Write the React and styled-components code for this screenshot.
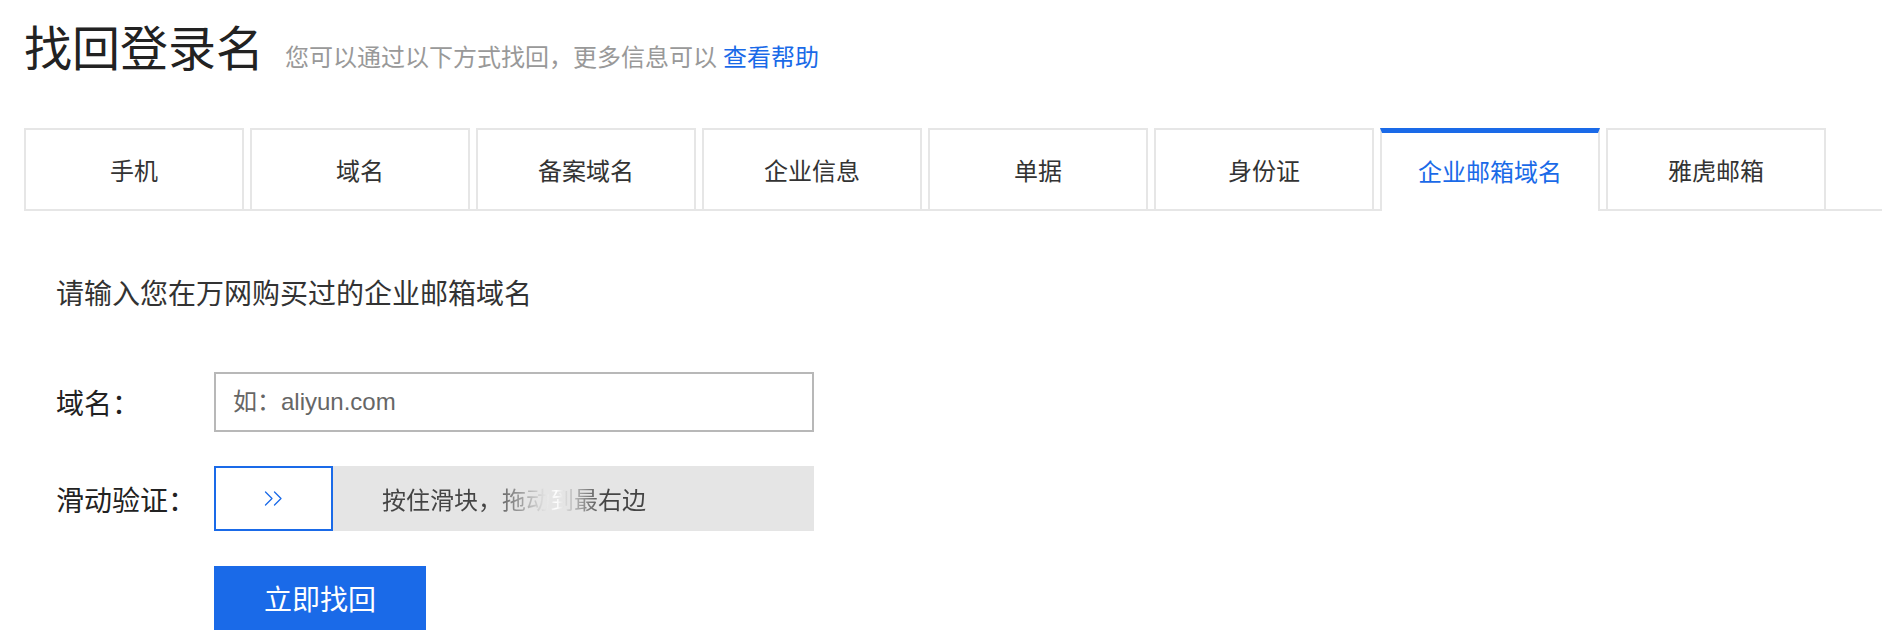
import styled, {createGlobalStyle} from "styled-components";

const Global=createGlobalStyle`
     html,body{
          margin:0;
          padding:0;
          background:#fff;
     }
     body{
          font-family:"Liberation Sans","Noto Sans CJK SC",sans-serif;
          color:#333;
     }
`;

const BLUE="#1a6ae8";

const Page=styled.div`
     width:1882px;
     height:642px;
     overflow:hidden;
`;

const Header=styled.div`
     display:flex;
     align-items:baseline;
     margin:21px 0 0 24px;
`;

const Title=styled.h1`
     margin:0;
     font-family:"Noto Sans CJK SC",sans-serif;
     font-size:48px;
     line-height:48px;
     font-weight:400;
     color:#222;
`;

const Sub=styled.span`
     margin-left:21px;
     font-family:"Noto Sans CJK SC",sans-serif;
     font-size:24px;
     color:#999;
     a{
          color:${BLUE};
          text-decoration:none;
          margin-left:6px;
     }
`;

const TabBar=styled.div`
     display:flex;
     align-items:flex-end;
     gap:6px;
     margin:55px 0 0 24px;
     border-bottom:2px solid #e6e6e6;
`;

const Tab=styled.div`
     box-sizing:border-box;
     width:220px;
     height:${(p)=>(p.$active ? "83px" : "81px")};
     margin-bottom:${(p)=>(p.$active ? "-2px" : "0")};
     display:flex;
     align-items:center;
     justify-content:center;
     border:2px solid #e6e6e6;
     border-bottom:none;
     border-top:${(p)=>(p.$active ? `5px solid ${BLUE}` : "2px solid #e6e6e6")};
     padding-bottom:${(p)=>(p.$active ? "3px" : "0")};
     background:#fff;
     font-family:"Noto Sans CJK SC",sans-serif;
     font-size:24px;
     color:${(p)=>(p.$active ? BLUE : "#333")};
     cursor:pointer;
`;

const Body=styled.div`
     padding:61px 0 0 56px;
`;

const Intro=styled.div`
     font-family:"Noto Sans CJK SC",sans-serif;
     font-size:28px;
     line-height:40px;
     color:#333;
     margin-bottom:60px;
`;

const Row=styled.div`
     display:flex;
     align-items:center;
     margin-bottom:${(p)=>p.$gap || 0}px;
`;

const Label=styled.label`
     width:158px;
     flex-shrink:0;
     font-family:"Noto Sans CJK SC",sans-serif;
     font-size:28px;
     color:#222;
`;

const Input=styled.input`
     box-sizing:border-box;
     width:600px;
     height:60px;
     border:2px solid #b8b8b8;
     padding:0 17px;
     font-family:"Liberation Sans","Noto Sans CJK SC",sans-serif;
     font-size:24px;
     color:#333;
     outline:none;
     &::placeholder{
          color:#666;
     }
`;

const Slider=styled.div`
     position:relative;
     width:600px;
     height:65px;
     background:#e5e5e5;
     display:flex;
     align-items:center;
`;

const Handle=styled.div`
     box-sizing:border-box;
     width:119px;
     height:100%;
     background:#fff;
     border:2px solid ${BLUE};
     display:flex;
     align-items:center;
     justify-content:center;
     position:relative;
     z-index:1;
     cursor:grab;
`;

const HintWrap=styled.div`
     position:absolute;
     inset:0;
     display:flex;
     align-items:center;
     justify-content:center;
`;

const Hint=styled.span`
     display:inline-block;
     font-family:"Noto Sans CJK SC",sans-serif;
     font-size:24px;
     color:transparent;
     background:linear-gradient(90deg,#444 0%,#444 40%,#fff 66%,#444 84%,#444 100%);
     -webkit-background-clip:text;
     background-clip:text;
`;

const Submit=styled.button`
     margin-left:158px;
     width:212px;
     height:64px;
     border:none;
     background:${BLUE};
     color:#fff;
     font-family:"Noto Sans CJK SC",sans-serif;
     font-size:28px;
     cursor:pointer;
`;

const Chevrons=()=>(
     <svg width="19" height="15" viewBox="0 0 19 15" fill="none" stroke={BLUE} strokeWidth="1.3" strokeLinecap="round" strokeLinejoin="round">
          <polyline points="1.5,1 8,7.5 1.5,14"/>
          <polyline points="10.5,1 17,7.5 10.5,14"/>
     </svg>
);

const tabs=["手机","域名","备案域名","企业信息","单据","身份证","企业邮箱域名","雅虎邮箱"];

function App(){
     return(
          <>
               <Global/>
               <Page>
                    <Header>
                         <Title>找回登录名</Title>
                         <Sub>您可以通过以下方式找回，更多信息可以<a href="#">查看帮助</a></Sub>
                    </Header>
                    <TabBar>
                         {tabs.map((t)=>(
                              <Tab key={t} $active={t==="企业邮箱域名"}>{t}</Tab>
                         ))}
                    </TabBar>
                    <Body>
                         <Intro>请输入您在万网购买过的企业邮箱域名</Intro>
                         <Row $gap={34}>
                              <Label>域名：</Label>
                              <Input placeholder="如：aliyun.com"/>
                         </Row>
                         <Row $gap={35}>
                              <Label>滑动验证：</Label>
                              <Slider>
                                   <HintWrap><Hint>按住滑块，拖动到最右边</Hint></HintWrap>
                                   <Handle><Chevrons/></Handle>
                              </Slider>
                         </Row>
                         <Submit>立即找回</Submit>
                    </Body>
               </Page>
          </>
     );
}

export default App;
